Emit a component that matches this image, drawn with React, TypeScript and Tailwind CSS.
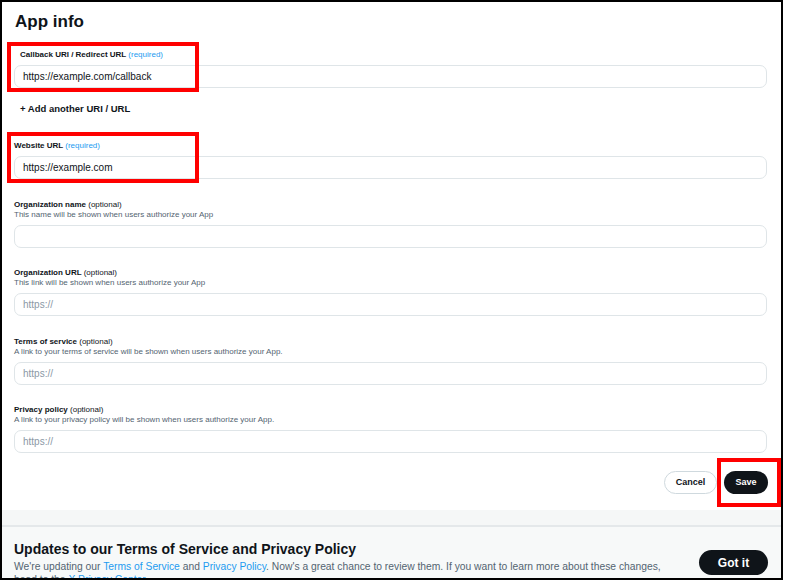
import React from "react";

const font = { fontFamily: '"Liberation Sans", Arial, sans-serif' };

type FieldProps = {
  label: string;
  hint?: string;
  required?: boolean;
  value?: string;
  placeholder?: string;
  labelIndent?: boolean;
};

function Field({ label, hint, required, value, placeholder, labelIndent }: FieldProps) {
  return (
    <div>
      <div className={`text-[8px] leading-[11px] font-bold text-[#0f1419] ${labelIndent ? "pl-[6px]" : ""}`}>
        {label}{" "}
        {required ? (
          <span className="font-normal text-[#1d9bf0]">(required)</span>
        ) : (
          <span className="font-normal">(optional)</span>
        )}
      </div>
      {hint && <div className="text-[8px] leading-[10px] text-[#536471]">{hint}</div>}
      <div className="mt-[5px] flex h-[23px] items-center rounded-[7px] border border-[#dfe5e8] px-2 text-[10px]">
        {value ? (
          <span className="text-[#0f1419]">{value}</span>
        ) : (
          <span className="text-[#8b98a5]">{placeholder}</span>
        )}
      </div>
    </div>
  );
}

export default function App() {
  return (
    <div className="h-[582px] w-[786px] bg-white" style={font}>
      <div className="relative flex h-[580px] w-[783px] flex-col overflow-hidden border-2 border-black">
        {/* form */}
        <div className="h-[508px] shrink-0 bg-white pl-[12px] pr-[14px]">
          <h1 className="mt-2 pl-[1px] text-[17px] leading-6 font-bold text-[#0f1419]">App info</h1>

          <div className="mt-[15px]">
            <Field label="Callback URI / Redirect URL" required value="https://example.com/callback" labelIndent />
          </div>

          <div className="mt-[14px] pl-[6px] text-[9.5px] leading-[14px] font-bold text-[#0f1419]">
            + Add another URI / URL
          </div>

          <div className="mt-[24px]">
            <Field label="Website URL" required value="https://example.com" />
          </div>

          <div className="mt-[20px]">
            <Field label="Organization name" hint="This name will be shown when users authorize your App" />
          </div>
          <div className="mt-[19px]">
            <Field
              label="Organization URL"
              hint="This link will be shown when users authorize your App"
              placeholder="https://"
            />
          </div>
          <div className="mt-[20px]">
            <Field
              label="Terms of service"
              hint="A link to your terms of service will be shown when users authorize your App."
              placeholder="https://"
            />
          </div>
          <div className="mt-[19px]">
            <Field
              label="Privacy policy"
              hint="A link to your privacy policy will be shown when users authorize your App."
              placeholder="https://"
            />
          </div>

          <div className="mt-[18px] flex justify-end gap-[7px]">
            <button className="h-[23px] w-[53px] rounded-full border border-[#cfd9de] bg-white text-[9px] font-bold text-[#0f1419]">
              Cancel
            </button>
            <button className="mr-[-1px] h-[23px] w-[44px] rounded-full bg-[#0f1419] text-[9px] font-bold text-white">
              Save
            </button>
          </div>
        </div>

        {/* page gap */}
        <div className="h-[15px] shrink-0 bg-[#f5f7f7]" />

        {/* terms update banner */}
        <div className="flex flex-1 border-t-2 border-[#e4e8ea] bg-[#f7f9f9] pl-[12px] pr-[13px]">
          <div className="flex-1 pt-[13px]">
            <div className="text-[14px] leading-[18px] font-bold text-[#0f1419]">
              Updates to our Terms of Service and Privacy Policy
            </div>
            <div className="mt-[2px] text-[10.3px] leading-[13px] text-[#536471]">
              We're updating our <span className="text-[#1d9bf0]">Terms of Service</span> and{" "}
              <span className="text-[#1d9bf0]">Privacy Policy</span>. Now's a great chance to review them. If you want to
              learn more about these changes,
              <br />
              head to the <span className="text-[#1d9bf0]">X Privacy Center</span>.
            </div>
          </div>
          <button className="mt-[23px] h-[25px] w-[69px] shrink-0 rounded-full bg-[#0f1419] text-[12px] font-bold text-white">
            Got it
          </button>
        </div>

        {/* annotation boxes */}
        <div className="absolute top-[40px] left-[5px] h-[50px] w-[192px] border-4 border-[#ff0000]" />
        <div className="absolute top-[130px] left-[5px] h-[51px] w-[192px] border-4 border-[#ff0000]" />
        <div className="absolute top-[456px] left-[715px] h-[49px] w-[64px] border-4 border-[#ff0000]" />
      </div>
    </div>
  );
}
